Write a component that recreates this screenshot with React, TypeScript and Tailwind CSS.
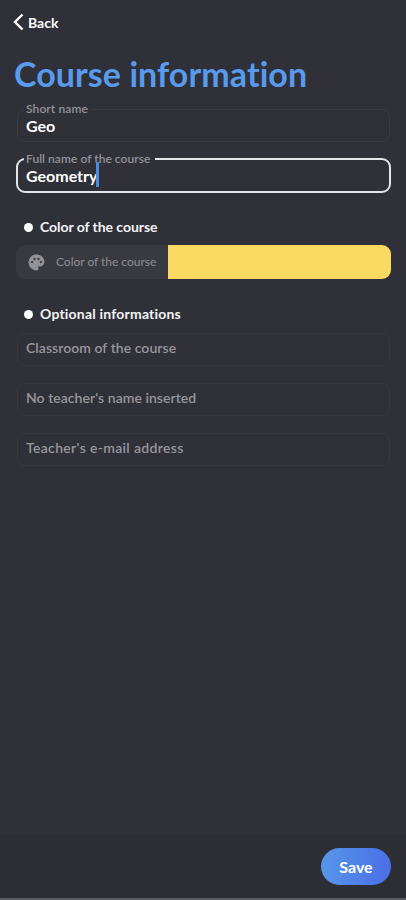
import React from "react";
import { MdPalette } from "react-icons/md";

function Heading({ children, spacing }: { children: string; spacing: string }) {
  return (
    <div className="flex h-5 items-center pl-2">
      <span className="size-[9px] rounded-full bg-white" />
      <h2 className={`ml-[7px] whitespace-nowrap text-[14px] font-bold leading-5 text-[#f4f4f6] ${spacing}`}>{children}</h2>
    </div>
  );
}

function OptionalField({ text, spacing }: { text: string; spacing: string }) {
  return (
    <div className="flex h-[33px] items-center rounded-[8px] border border-[#37373e] pb-[4px] pl-[8px]">
      <span className={`whitespace-nowrap text-[14px] font-semibold leading-5 text-[#97979d] ${spacing}`}>{text}</span>
    </div>
  );
}

export default function App() {
  return (
    <div className="flex h-[900px] w-[406px] flex-col overflow-hidden bg-[#303038] font-['Lato','Liberation_Sans',sans-serif] [font-variant-ligatures:none]">
      <header className="h-[109px] pl-[13px] pt-[12px]">
        <div className="flex h-5 items-center text-white">
          <svg width="11" height="18" viewBox="0 0 11 18" fill="none" stroke="currentColor" strokeWidth="2.4">
            <path d="M9.5 1.5 2 9l7.5 7.5" />
          </svg>
          <span className="ml-[4px] text-[14px] font-bold">Back</span>
        </div>
        <h1 className="ml-[1px] mt-[21px] whitespace-nowrap text-[34px] font-bold leading-[42px] tracking-[0.08px] text-[#589aec]">Course information</h1>
      </header>

      <main className="flex flex-1 flex-col pl-4 pr-[15px]">
        <div className="relative mx-px flex h-[33px] items-center rounded-[8px] border border-[#3a3a41] pl-[8px]">
          <span className="absolute left-[6px] top-[-8px] whitespace-nowrap bg-[#303038] px-[2px] text-[12px] font-semibold leading-[14px] tracking-[0.1px] text-[#92929a]">Short name</span>
          <span className="text-[16px] font-bold leading-5 text-white">Geo</span>
        </div>

        <div className="relative mt-4 flex h-[35px] items-center rounded-[9px] border-2 border-[#e5e5e8] pl-[8px]">
          <span className="absolute left-[6px] top-[-8px] whitespace-nowrap bg-[#303038] pl-[2px] pr-[5px] text-[12px] font-semibold leading-[14px] tracking-[0.04px] text-[#92929a]">Full name of the course</span>
          <span className="text-[16px] font-bold leading-5 text-white">Geometry</span>
          <span className="absolute left-[78px] top-[2px] h-[25px] w-[3px] bg-[#4a8de0]" />
        </div>

        <section className="mt-[24px]">
          <Heading spacing="tracking-[-0.05px]">Color of the course</Heading>
          <div className="mt-[8px] flex h-[34px] overflow-hidden rounded-[9px]">
            <div className="flex w-[152px] items-center bg-[#393940] pl-[11px] text-[#88888e]">
              <MdPalette size={19} className="text-[#929297]" />
              <span className="ml-[10px] whitespace-nowrap text-[12px] font-medium tracking-[-0.03px]">Color of the course</span>
            </div>
            <div className="flex-1 bg-[#f9d961]" />
          </div>
        </section>

        <section className="mt-[25px]">
          <Heading spacing="tracking-[0.2px]">Optional informations</Heading>
          <div className="mx-px mt-[9px] flex flex-col gap-[17px]">
            <OptionalField text="Classroom of the course" spacing="tracking-[0.05px]" />
            <OptionalField text="No teacher's name inserted" spacing="tracking-[0.05px]" />
            <OptionalField text="Teacher's e-mail address" spacing="tracking-[0.33px]" />
          </div>
        </section>
      </main>

      <footer className="flex h-[65px] items-start justify-end border-b-2 border-[#5a5a65] bg-[#2d2e33] pr-[15px] pt-[13px]">
        <button className="h-[37px] w-[70px] rounded-full bg-linear-to-r from-[#5796eb] to-[#4b6ee6] pt-px text-[16px] font-bold text-white">Save</button>
      </footer>
    </div>
  );
}
